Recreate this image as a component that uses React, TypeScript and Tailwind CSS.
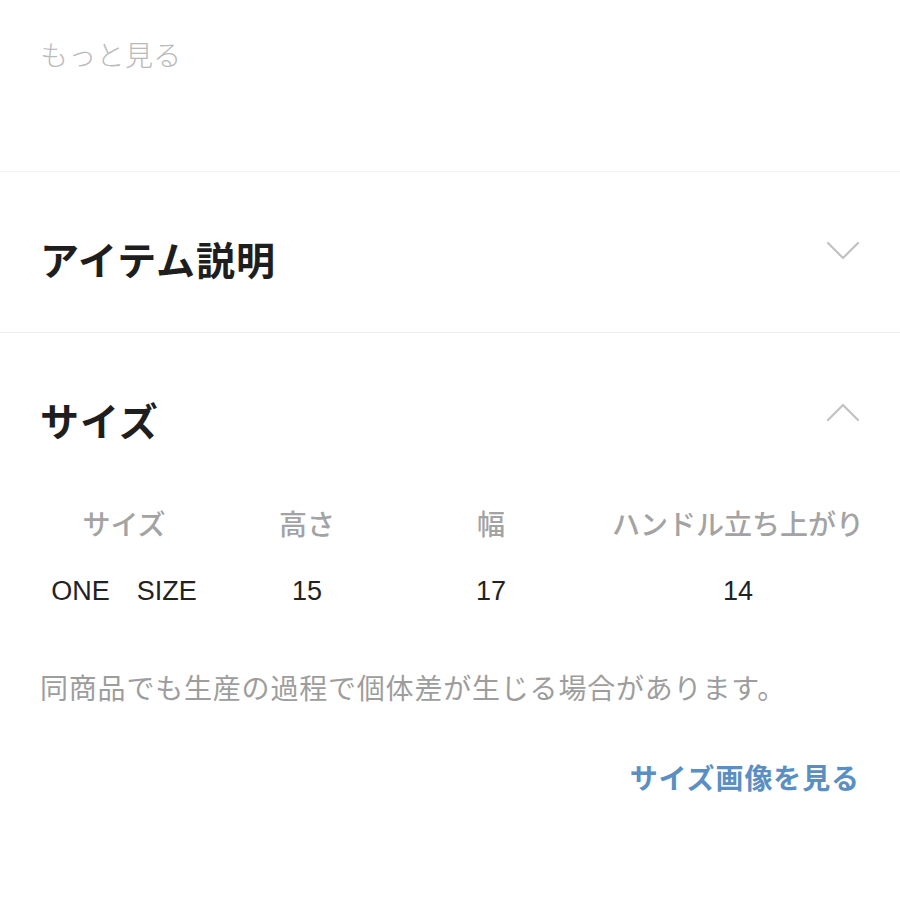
import React from "react";

const jp = { fontFamily: '"Noto Sans CJK JP", "Noto Sans", sans-serif' };
const latin = { fontFamily: '"Liberation Sans", "Noto Sans CJK JP", sans-serif' };

function Chevron({ up = false }: { up?: boolean }) {
  return (
    <svg width="34" height="20" viewBox="0 0 34 20" className="shrink-0">
      <polyline
        points={up ? "2,18 17,3 32,18" : "2,2 17,17 32,2"}
        fill="none"
        stroke="#c2c2c2"
        strokeWidth="2.2"
        strokeLinecap="round"
        strokeLinejoin="round"
      />
    </svg>
  );
}

const headers = ["サイズ", "高さ", "幅", "ハンドル立ち上がり"];
const values = ["ONE\u3000SIZE", "15", "17", "14"];

export default function App() {
  return (
    <div className="w-[900px] h-[900px] bg-white overflow-hidden" style={jp}>
      {/* description teaser */}
      <div className="h-[172px] border-b border-[#f3f3f3] pl-[40px] pt-[40px]">
        <span className="text-[28px] leading-[28px] text-[#bababa] font-light tracking-[0.3px]">もっと見る</span>
      </div>

      {/* item description (collapsed) */}
      <div className="h-[161px] border-b border-[#ededed] px-[40px] pt-[67px] flex items-start justify-between">
        <h2 className="text-[39px] leading-[39px] font-bold text-[#1e1e1e] tracking-[1px]">アイテム説明</h2>
        <div className="mt-[2px]">
          <Chevron />
        </div>
      </div>

      {/* size (expanded) */}
      <div className="px-[40px] pt-[67px]">
        <div className="flex items-start justify-between">
          <h2 className="text-[39px] leading-[39px] font-bold text-[#1e1e1e] tracking-[1px]">サイズ</h2>
          <div className="mt-[2px]">
            <Chevron up />
          </div>
        </div>

        <div className="mt-[70px] grid grid-cols-[168px_198px_170px_324px] -mr-[40px]">
          {headers.map((h) => (
            <div key={h} className="text-center text-[28px] leading-[28px] font-medium text-[#a3a3a3] whitespace-nowrap">
              {h}
            </div>
          ))}
        </div>
        <div className="mt-[40px] grid grid-cols-[168px_198px_170px_324px] -mr-[40px]">
          {values.map((v, i) => (
            <div key={i} className="text-center text-[27px] leading-[28px] text-[#222] whitespace-nowrap" style={latin}>
              {v}
            </div>
          ))}
        </div>

        <p className="mt-[68px] text-[28px] leading-[28px] text-[#9d9d9d] whitespace-nowrap tracking-[0.8px]">
          同商品でも生産の過程で個体差が生じる場合があります。
        </p>

        <div className="mt-[62px] flex justify-end">
          <span className="text-[28px] leading-[28px] font-bold text-[#5b8fc3] tracking-[0.9px]">サイズ画像を見る</span>
        </div>
      </div>
    </div>
  );
}
